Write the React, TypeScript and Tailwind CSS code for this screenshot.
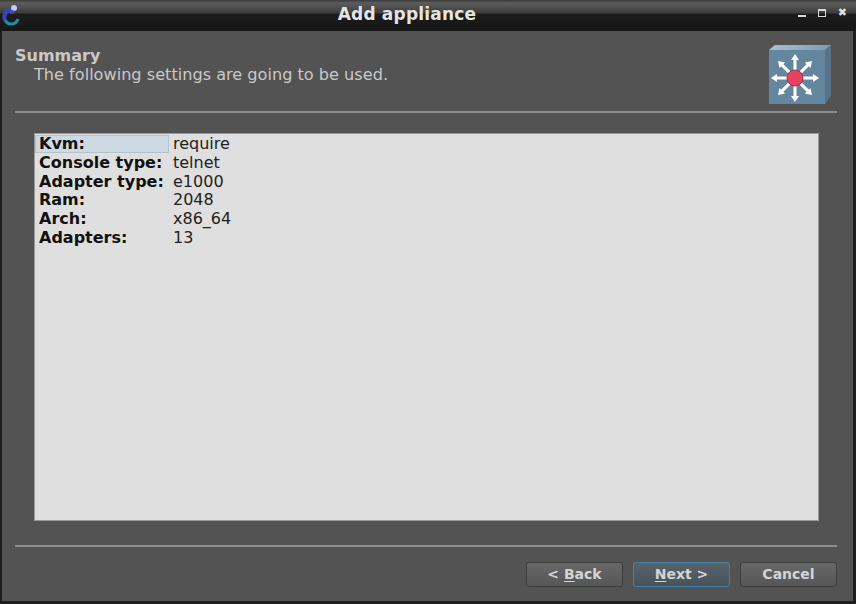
import React from "react";

const rows = [
  ["Kvm:", "require"],
  ["Console type:", "telnet"],
  ["Adapter type:", "e1000"],
  ["Ram:", "2048"],
  ["Arch:", "x86_64"],
  ["Adapters:", "13"],
];

const SwitchIcon = () => {
  const angles = [0, 45, 90, 135, 180, 225, 270, 315];
  return (
    <svg width="64" height="60" viewBox="0 0 64 60">
      <defs>
        <linearGradient id="cubeTop" x1="0" y1="0" x2="1" y2="0">
          <stop offset="0" stopColor="#a9bfd4" />
          <stop offset="1" stopColor="#7f9bb3" />
        </linearGradient>
      </defs>
      <polygon points="1,5 7,0 63,0 63,50 57,59 1,59" fill="#64869f" />
      <polygon points="1,5 7,0 63,0 57,5" fill="url(#cubeTop)" />
      <polygon points="57,5 63,0 63,50 57,59" fill="#587389" />
      {angles.map((a) => (
        <g key={a} transform={`rotate(${a} 27 33)`}>
          <rect x="25.5" y="13" width="3" height="16" fill="#ffffff" />
          <polygon points="27,9 23,15 31,15" fill="#ffffff" />
        </g>
      ))}
      <circle cx="27" cy="33" r="8" fill="#e8405f" />
      <circle cx="27" cy="33" r="8" fill="none" stroke="#8a3a50" strokeWidth="1" />
    </svg>
  );
};

const AppIcon = () => (
  <svg width="20" height="24" viewBox="0 0 20 24">
    <path d="M4 18 A7 7 0 0 0 17 17" fill="none" stroke="#1b8fa8" strokeWidth="3" />
    <path d="M4 18 A7 7 0 0 1 10 8" fill="none" stroke="#3448b8" strokeWidth="4" />
    <circle cx="13" cy="6" r="3" fill="#c9c6f5" />
    <circle cx="11" cy="10" r="2" fill="#3a4fc0" />
  </svg>
);

const Btn = ({ children, primary }: { children: React.ReactNode; primary?: boolean }) => (
  <button
    className={
      primary
        ? "w-[97px] h-[25px] rounded-[3px] border border-[#3f83ab] bg-gradient-to-b from-[#59636b] to-[#47525a] text-[14px] font-bold text-[#d4d4d4]"
        : "w-[97px] h-[25px] rounded-[3px] border border-[#3e3e3e] bg-gradient-to-b from-[#686868] to-[#565656] text-[14px] font-bold text-[#d4d4d4]"
    }
  >
    {children}
  </button>
);

export default function App() {
  return (
    <div className="w-[856px] h-[604px] flex flex-col bg-[#1e1e1e] font-['DejaVu_Sans',sans-serif] overflow-hidden">
      <div className="h-[31px] shrink-0 relative bg-[linear-gradient(to_bottom,#3a3a3a_0px,#5c5c5c_3px,#3c3c3c_13px,#1c1c1c_14px,#161616_31px)] flex items-center justify-center">
        <span className="text-[17px] font-bold text-[#e4e4e4] leading-none tracking-[0.2px] mt-[-3px] mr-[42px]">Add appliance</span>
        <div className="absolute left-[1px] top-[2px]">
          <AppIcon />
        </div>
        <div className="absolute right-[9px] top-[9px] flex items-start gap-[12px]">
          <div className="w-[8px] h-[2px] bg-[#d8d8d8] mt-[6px]" />
          <div className="w-[8px] h-[8px] border border-[#d8d8d8] border-t-2" />
          <span className="text-[11px] leading-[8px] font-bold text-[#e0e0e0]">✖</span>
        </div>
      </div>

      <div className="flex-1 ml-[2px] mr-[3px] mb-[3px] bg-[#535353] flex flex-col pl-[13px] pr-[16px]">
        <div className="h-[80px] shrink-0 flex justify-between items-start">
          <div className="pt-[16px]">
            <div className="text-[16px] leading-[18px] font-bold text-[#c9c9c9]">Summary</div>
            <div className="text-[16.14px] leading-[18px] text-[#c9c9c9] ml-[19px] mt-[1px]">
              The following settings are going to be used.
            </div>
          </div>
          <div className="mt-[14px] mr-[5px]">
            <SwitchIcon />
          </div>
        </div>

        <div className="h-[2px] bg-[#8f8c8c] shrink-0" />

        <div className="flex-1 pt-[20px] pl-[19px] pr-[18px]">
          <div className="h-[388px] bg-[#dfdfdf] border border-[#9a9a9a] pt-[1px] pl-[1px]">
            {rows.map(([k, v], i) => (
              <div key={k} className="flex h-[18.7px] items-center text-[16px] text-[#111]">
                <div
                  className={
                    i === 0
                      ? "w-[134px] h-[18px] pl-[3px] font-bold leading-[16px] bg-[#cdd9e3] border border-[#b4c2cf] -ml-[1px]"
                      : "w-[133px] pl-[3px] font-bold leading-[18px]"
                  }
                >
                  {k}
                </div>
                <div className="pl-[4px] leading-[18px] text-[#222]">{v}</div>
              </div>
            ))}
          </div>
        </div>

        <div className="h-[2px] bg-[#8f8c8c] shrink-0" />

        <div className="h-[54px] shrink-0 flex justify-end gap-[10px] pt-[15px]">
          <Btn>
            &lt; <span className="underline underline-offset-2">B</span>ack
          </Btn>
          <Btn primary>
            <span className="underline underline-offset-2">N</span>ext &gt;
          </Btn>
          <Btn>Cancel</Btn>
        </div>
      </div>
    </div>
  );
}
